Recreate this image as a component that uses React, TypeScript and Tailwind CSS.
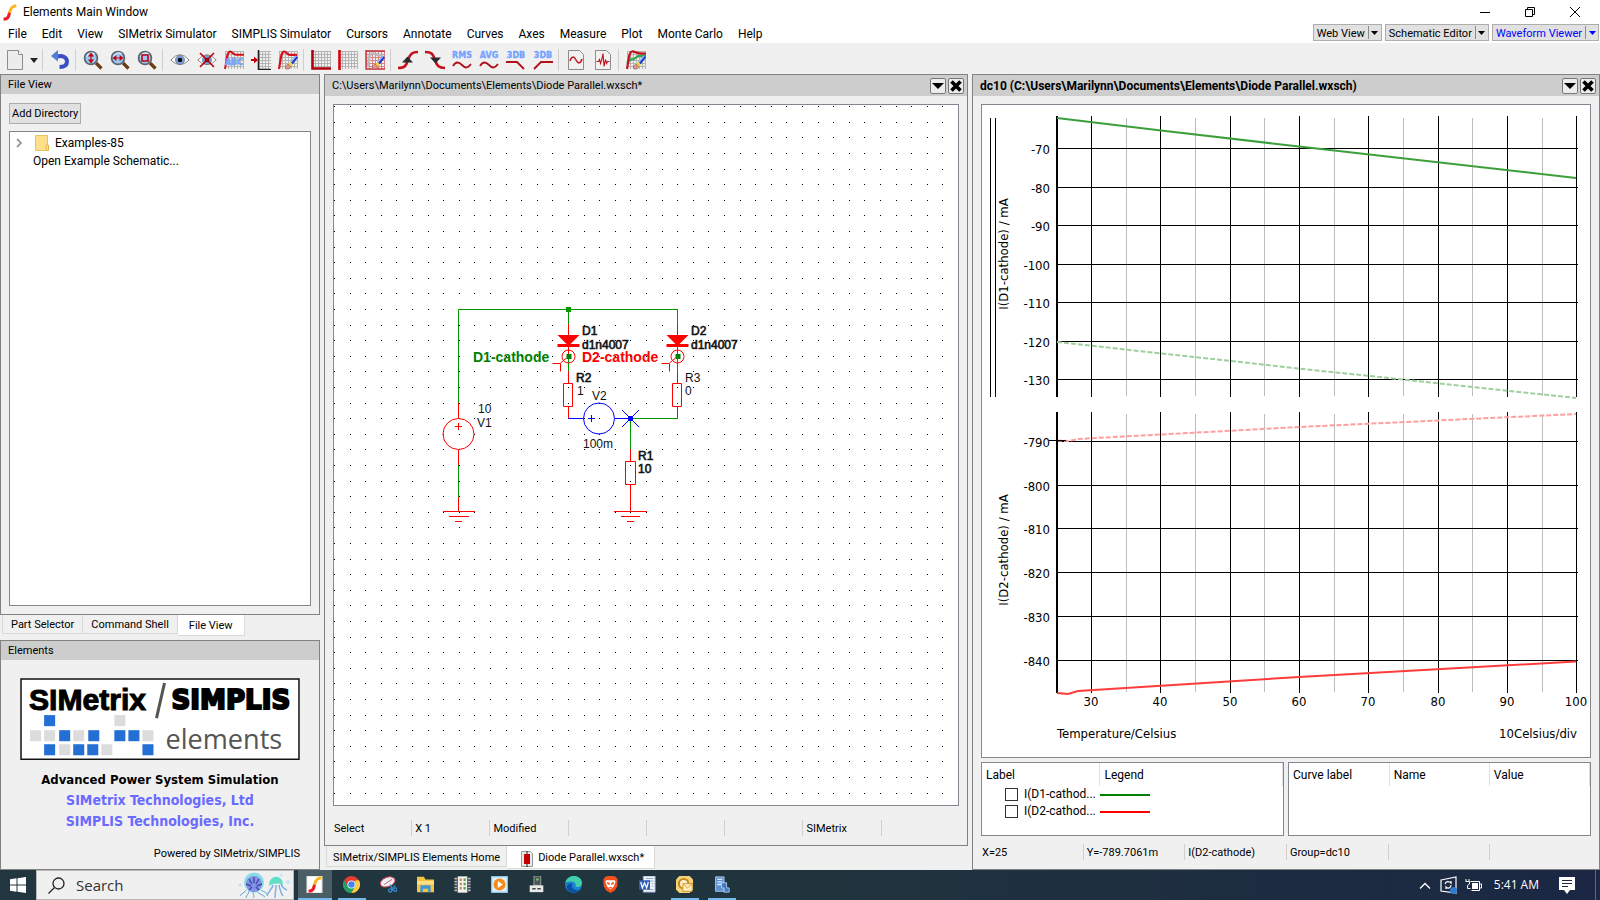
import type { ReactNode } from "react";

const menus = ["File", "Edit", "View", "SIMetrix Simulator", "SIMPLIS Simulator", "Cursors", "Annotate", "Curves", "Axes", "Measure", "Plot", "Monte Carlo", "Help"];

function Icon({ children, size = 20 }: { children: ReactNode; size?: number }) {
	return (
		<svg width={size} height={size} viewBox="0 0 20 20" fill="none" aria-hidden="true" className="shrink-0">
			{children}
		</svg>
	);
}

function Tool({ label, children }: { label: string; children: ReactNode }) {
	return (
		<button type="button" aria-label={label} className="flex w-[27px] items-center justify-center">
			<Icon>{children}</Icon>
		</button>
	);
}

function Separator() {
	return <span className="ml-[2px] mr-[3px] h-[22px] w-px bg-[#cfcfcf]" />;
}

function Grid({ x = 1, w = 19, color = "#b4b4b4" }) {
	const cols = [];
	for (let i = x; i <= x + w; i += 3) cols.push(i);
	return (
		<g stroke={color} strokeWidth="1" shapeRendering="crispEdges">
			{cols.map((c) => <path key={c} d={`M${c + 0.5} 1v18`} />)}
			{[1, 4, 7, 10, 13, 16].map((r) => <path key={r} d={`M${x} ${r + 0.5}H20`} />)}
		</g>
	);
}

function Pencil() {
	return (
		<g>
			<path d="M12.500 12.500 18 6l2 1.500-5.500 7z" fill="#1238c8" />
			<path d="M12.800 12.200 18 6" stroke="#8fb4ff" strokeWidth="1.400" />
			<path d="m10 14 2.500-2 2.500 2.600-2 2.200z" fill="#f3d23c" />
			<path d="M7 16.500 10 14l3 2.800L11 19H8z" fill="#d9968c" stroke="#94584f" strokeWidth=".6" />
		</g>
	);
}

function Magnifier() {
	return (
		<g>
			<path d="m13 13 5.500 5.500" stroke="#6b3b12" strokeWidth="3.200" />
			<circle cx="8" cy="8" r="6.400" fill="#9cc8f4" stroke="#5c6670" strokeWidth="1.800" />
			<path d="M3.600 7a5 5 0 0 1 8-3" stroke="#d8ecff" strokeWidth="1.200" />
		</g>
	);
}

function Eye() {
	return (
		<g>
			<path d="M.8 10Q10-.6 19.200 10 10 19.200.8 10z" fill="#fff" stroke="#8e887c" strokeWidth="1" />
			<circle cx="10" cy="10" r="4.600" fill="#7e9fd0" stroke="#51709e" strokeWidth=".6" />
			<circle cx="10" cy="10" r="2.300" fill="#0a0d18" />
		</g>
	);
}

function Sheet() {
	return <path d="M2.500.5h11l4 4v15h-15z" fill="#f1f1f1" stroke="#8d8d8d" />;
}

function SimText({ children, y = 7.5 }: { children: string; y?: number }) {
	return (
		<text x="10" y={y} textAnchor="middle" fontSize="8" fontWeight="700" fontFamily="DejaVu Sans" fill="#74a2ff" stroke="#74a2ff" strokeWidth=".3">
			{children}
		</text>
	);
}

function Swoosh() {
	return (
		<>
			<path d="M3 18c6-.5 6-3.500 7.200-8.500" stroke="#ee1c25" strokeWidth="3.600" />
			<path d="M10 10.500C11 5.500 12.500 2.500 18 2" stroke="#fbb615" strokeWidth="3.600" />
		</>
	);
}

function Toolbar() {
	return (
		<div className="flex h-[31px] items-center bg-[#f0f0f0] pt-[3px]" role="toolbar" aria-label="Main toolbar">
			<button type="button" aria-label="New" className="flex w-10 items-center justify-between pl-[5px] pr-[2px]">
				<Icon>
					<path d="M2.500.5h11l4 4v15h-15z" fill="#ececec" stroke="#8d8d8d" />
					<path d="M13.500.5v4h4" fill="#fff" stroke="#8d8d8d" />
				</Icon>
				<svg width="8" height="5" viewBox="0 0 8 5"><path d="M0 0h8L4 5z" fill="#222" /></svg>
			</button>
			<Separator />
			<Tool label="Undo">
				<path d="M7 6.500c5-1.500 10 .5 10 5 0 3.800-3 5.500-7.500 5.500" stroke="#3a4fc4" strokeWidth="4" />
				<path d="M1 6 8 0v11.500z" fill="#4f7fdc" />
			</Tool>
			<Separator />
			<Tool label="Zoom vertical">
				<Magnifier />
				<path d="M8 4.500v7M6.200 5.800 8 3.500l1.800 2.300zM6.200 10.200 8 12.500l1.800-2.300z" stroke="#c4000d" strokeWidth="1.200" fill="#c4000d" />
			</Tool>
			<Tool label="Zoom horizontal">
				<Magnifier />
				<path d="M4.500 8h7M5.800 6.200 3.500 8l2.300 1.800zM10.200 6.200 12.500 8l-2.300 1.800z" stroke="#c4000d" strokeWidth="1.200" fill="#c4000d" />
			</Tool>
			<Tool label="Zoom box">
				<Magnifier />
				<path d="M5 5h6v6H5z" stroke="#c4000d" strokeWidth="1.600" />
			</Tool>
			<Separator />
			<Tool label="Show curves"><Eye /></Tool>
			<Tool label="Hide curves">
				<Eye />
				<path d="m3 3 14 14M17 3 3 17" stroke="#c4000d" strokeWidth="1.600" />
			</Tool>
			<Tool label="Name curve">
				<Grid />
				<path d="M1 19C3 8 3 2 6 1.500c3 0 2 3 6 3.300h8" stroke="#d80d18" strokeWidth="2" />
				<SimText y={14.5}>ABC</SimText>
			</Tool>
			<Tool label="Move to axis">
				<Grid x={8} w={12} />
				<path d="M7.500 0v19.500H20" stroke="#222" strokeWidth="1.600" />
				<path d="M0 10h4" stroke="#c4000d" strokeWidth="2" />
				<path d="M3 6.500v7L7 10z" fill="#c4000d" />
			</Tool>
			<Tool label="Edit curve">
				<Grid />
				<path d="M1 19C3 8 3 2 6 1.500c3 0 2 3 6 3.300h7" stroke="#d80d18" strokeWidth="2.200" />
				<Pencil />
			</Tool>
			<Separator />
			<Tool label="New grid">
				<Grid />
				<path d="M1.500 0v18.500H20" stroke="#b4000c" strokeWidth="2.600" />
			</Tool>
			<Tool label="New axis">
				<Grid />
				<path d="M1.500 0v20" stroke="#d8000c" strokeWidth="2.600" />
			</Tool>
			<Tool label="Edit axis">
				<Grid color="#d98080" />
				<path d="M1 0v19H20M1 1h19" stroke="#c4333c" strokeWidth="1.400" />
				<path d="M3 17C4 8 4 4 7 3.500s3 2 11 2" stroke="#b9b9b9" strokeWidth="2.600" />
				<Pencil />
			</Tool>
			<Separator />
			<Tool label="Next peak">
				<path d="M0 18c7 0 8-2 10-8s4-8 10-8" stroke="#c4101a" strokeWidth="2.600" />
				<path d="M9.500 6.500 15 12.500H4z" fill="#2b2b2b" />
			</Tool>
			<Tool label="Next trough">
				<path d="M0 2c7 0 8 2 10 8s4 8 10 8" stroke="#c4101a" strokeWidth="2.600" />
				<path d="M10.500 13.500 5 7.500h11z" fill="#2b2b2b" />
			</Tool>
			<Tool label="RMS">
				<SimText>RMS</SimText>
				<path d="M1 16c3-5 6-4 9-1s5 4 9-1" stroke="#b4101a" strokeWidth="1.800" />
			</Tool>
			<Tool label="Average">
				<SimText>AVG</SimText>
				<path d="M1 16c3-5 6-4 9-1s5 4 9-1" stroke="#b4101a" strokeWidth="1.800" />
			</Tool>
			<Tool label="Low pass 3dB">
				<SimText>3DB</SimText>
				<path d="M0 12h11l7 7" stroke="#b4101a" strokeWidth="1.800" />
			</Tool>
			<Tool label="High pass 3dB">
				<SimText>3DB</SimText>
				<path d="M1 19 8 12h12" stroke="#b4101a" strokeWidth="1.800" />
			</Tool>
			<Separator />
			<Tool label="Plot waveform">
				<Sheet />
				<path d="M4 11c1.500-5 4-5 6-1s4.500 4 6-1" stroke="#c4101a" strokeWidth="1.500" />
			</Tool>
			<Tool label="Plot spectrum">
				<Sheet />
				<path d="M3.500 11.500h2l1-2 1 4 1.500-5 1-5 1 13 1.500-7 1 4 1-2h2" stroke="#c4101a" strokeWidth="1.100" />
			</Tool>
			<Separator />
			<Tool label="Edit plot">
				<Grid />
				<path d="M1 13C3 10 5 9 8 9l4-3h8" stroke="#2aa84a" strokeWidth="2" />
				<path d="M1 19C3 8 3 2 6 1.500s5 3 14 2" stroke="#c4101a" strokeWidth="2.200" />
				<Pencil />
			</Tool>
		</div>
	);
}

function ModeButton({ label, active }: { label: string; active?: boolean }) {
	return (
		<span className={`flex h-[17px] items-center border border-[#adadad] bg-[#e1e1e1] text-[11px] ${active ? "text-[#0000ff]" : "text-black"}`}>
			<button type="button" className="px-[3px] pt-px leading-[15px]">{label}</button>
			<button type="button" aria-label={`${label} options`} className="flex h-[13px] w-[13px] items-center justify-center border-l border-[#8a8a8a]">
				<svg width="7" height="4" viewBox="0 0 7 4"><path d="M0 0h7L3.500 4z" fill="currentColor" /></svg>
			</button>
		</span>
	);
}

function PanelTitle({ children, bold, controls }: { children: ReactNode; bold?: boolean; controls?: boolean }) {
	return (
		<header className={`flex items-center bg-[#cdcdcd] px-[7px] ${controls ? "h-[21px] pr-[3px]" : "h-[19px]"}`}>
			<h2 className={`flex-1 truncate ${bold ? "text-xs font-bold" : "pt-[2px]"}`}>{children}</h2>
			{controls && (
				<div className="flex gap-[2px]">
					<button type="button" aria-label="Panel menu" className="flex size-4 items-center justify-center rounded-xs border border-[#777] bg-[#ececec]">
						<svg width="12" height="6" viewBox="0 0 12 6"><path d="M0 0h12L6 6z" fill="#000" /></svg>
					</button>
					<button type="button" aria-label="Close panel" className="flex size-4 items-center justify-center rounded-xs border border-[#777] bg-[#ececec]">
						<svg width="12" height="12" viewBox="0 0 12 12"><path d="m1.500 1.500 9 9m0-9-9 9" stroke="#000" strokeWidth="3.600" /></svg>
					</button>
				</div>
			)}
		</header>
	);
}

const squares = [
	[24, 36, 1], [94, 36, 0],
	[10, 51, 0], [24, 51, 0], [39, 51, 1], [53, 51, 0], [68, 51, 1], [94, 51, 1], [108, 51, 1], [122, 51, 0],
	[24, 65, 1], [39, 65, 0], [53, 65, 1], [67, 65, 1], [81, 65, 0], [122, 65, 1],
];

function Logo() {
	return (
		<svg viewBox="0 0 279 82" className="block w-full" role="img" aria-label="SIMetrix/SIMPLIS elements">
			<rect x="1" y="1" width="277" height="80" fill="#fff" stroke="#111" strokeWidth="1.500" />
			<text x="9" y="32" fontFamily="Liberation Sans" fontWeight="700" fontSize="30" fill="#000" stroke="#000" strokeWidth="1">SIMetrix</text>
			<path d="m144 5-8 35" stroke="#555" strokeWidth="3" />
			<text x="151" y="31" fontFamily="DejaVu Sans" fontWeight="700" fontSize="26" fill="#000" stroke="#000" strokeWidth="2">SIMPLIS</text>
			{squares.map(([x, y, on]) => (
				<rect key={`${x}-${y}`} x={x} y={y + 1} width="11" height="11" fill={on ? "#246fd4" : "#dcdcdc"} />
			))}
			<text x="145" y="71" fontFamily="Open Sans" fontSize="27" fill="#555">elements</text>
		</svg>
	);
}

function SideBar() {
	return (
		<aside className="flex w-80 shrink-0 flex-col">
			<section className="flex flex-1 flex-col border border-[#828282]">
				<PanelTitle>File View</PanelTitle>
				<div className="flex flex-1 flex-col p-2">
					<button type="button" className="mt-px h-[21px] self-start border border-[#adadad] bg-[#e1e1e1] px-[2px] pt-[2px]">Add Directory</button>
					<ul className="mt-[7px] flex-1 border border-[#828790] bg-white pt-[2px] text-xs">
						<li className="flex h-[18px] items-center">
							<svg width="7" height="10" viewBox="0 0 7 10" className="ml-[6px]"><path d="m1 1 4 4-4 4" fill="none" stroke="#9a9a9a" strokeWidth="1.800" /></svg>
							<svg width="14" height="16" viewBox="0 0 14 16" className="ml-[12px] mr-[6px]">
								<path d="M.5.5h12v15H.5z" fill="#ffe08a" stroke="#e9c35c" />
								<path d="M11 10h2.500v5.500H11z" fill="#ffe08a" stroke="#e0b64a" />
							</svg>
							Examples-85
						</li>
						<li className="flex h-[18px] items-center pl-[23px]">Open Example Schematic...</li>
					</ul>
				</div>
			</section>
			<nav className="flex items-start pl-[2px]">
				<button type="button" className="h-[19px] border border-t-0 border-[#d9d9d9] px-[8px] pt-[3px]">Part Selector</button>
				<button type="button" className="h-[19px] border border-l-0 border-t-0 border-[#d9d9d9] px-[8px] pt-[3px]">Command Shell</button>
				<button type="button" className="h-[21px] border border-l-0 border-t-0 border-[#d9d9d9] bg-white px-[11px] pt-[3px]">File View</button>
			</nav>
			<section className="mt-1 border border-[#828282]">
				<PanelTitle>Elements</PanelTitle>
				<div className="px-[19px] pb-[7px] pt-[18px]">
					<Logo />
					<div className="mt-[10px] text-center font-['DejaVu_Sans_Condensed','Open_Sans',sans-serif] text-[13px] font-bold leading-[20px]">
						<p>Advanced Power System Simulation</p>
						<p><a href="#simetrix" className="text-sm leading-[20px] text-[#6a6aff]">SIMetrix Technologies, Ltd</a></p>
						<p><a href="#simplis" className="text-sm leading-[20px] text-[#6a6aff]">SIMPLIS Technologies, Inc.</a></p>
					</div>
					<p className="mt-[14px] text-right leading-[16px]">Powered by SIMetrix/SIMPLIS</p>
				</div>
			</section>
		</aside>
	);
}

// grid pitch of the schematic sheet, snapped to whole pixels
const PITCH = 15.6;
let dots = "";
for (let r = 0; r < 60; r++) {
	for (let c = 0; c < 80; c++) {
		dots += `M${Math.round(PITCH * c)} ${Math.round(1.2 + PITCH * r) + 0.5}h1`;
	}
}

function Diode({ x }: { x: number }) {
	return (
		<g>
			<path d={`M${x} 324v12M${x} 347v8`} stroke="#f00" />
			<path d={`M${x} 309v15M${x} 356v15`} stroke="#090" />
			<path d={`M${x - 11} 335h22l-9 9h-4z`} fill="#f00" />
			<path d={`M${x - 11} 345.500h22`} stroke="#f00" strokeWidth="3" />
			<circle cx={x} cy="356.500" r="6.500" stroke="#f00" />
			<path d={`M${x - 16} 363.500h8v8M${x - 8} 363l6-5`} stroke="#f00" />
			<path d={`M${x - 2} 354h5v5h-5z`} fill="#007f00" />
			<path d={`M${x} 371v12M${x} 406v12`} stroke="#f00" />
			<path d={`M${x - 5} 383.500h9v23h-9z`} stroke="#f00" />
		</g>
	);
}

function Schematic() {
	return (
		<svg className="block h-full w-full" role="img" aria-label="Diode Parallel schematic" fill="none">
			<path d={dots} stroke="#000" shapeRendering="crispEdges" />
			<g transform="translate(-334 -105)">
				<path d="M458.500 403V309.500H677.500M458.500 465v32M630.500 418v31M630 418.500h48" stroke="#090" />
				<Diode x={568.5} />
				<Diode x={677.5} />
				<path d="M566 307h5v5h-5z" fill="#090" />
				<g stroke="#f00">
					<path d="M458.500 403v15M458.500 450v15M458.500 497v15M443 511.500h32M449 516.500h20M455 521.500h7M455 426.500h7M458.500 423v7" />
					<circle cx="458.500" cy="434" r="15.500" />
					<path d="M630.500 449v12M630.500 485v27M614 511.500h33M621 516.500h19M627 521.500h7M625.500 461.500h10v23h-10z" />
				</g>
				<g stroke="#00f">
					<circle cx="599" cy="418.500" r="15.500" />
					<path d="M568 418.500h15M615 418.500h16M588 418.500h7M591.500 415v7M622 410l17 17M639 410l-17 17" />
					<path d="M628 416h5v5h-5z" fill="#00f" stroke="none" />
				</g>
				<g fill="#111" fontFamily="Liberation Sans, Arial, sans-serif" fontSize="12">
					<g stroke="#111" strokeWidth=".6">
						<text x="582" y="335">D1</text>
						<text x="582" y="349">d1n4007</text>
						<text x="691" y="335">D2</text>
						<text x="691" y="349">d1n4007</text>
						<text x="576" y="382">R2</text>
						<text x="638" y="460">R1</text>
						<text x="638" y="473">10</text>
					</g>
					<text x="577" y="395">1</text>
					<text x="685" y="382">R3</text>
					<text x="685" y="395">0</text>
					<text x="592" y="400">V2</text>
					<text x="583" y="448">100m</text>
					<text x="478" y="413">10</text>
					<text x="477" y="427">V1</text>
					<text x="473" y="362" fontSize="14" fontWeight="700" fill="#007f00">D1-cathode</text>
					<text x="582" y="362" fontSize="14" fontWeight="700" fill="#f00">D2-cathode</text>
				</g>
			</g>
		</svg>
	);
}

function StatusCells({ items, className }: { items: string[]; className: string }) {
	return (
		<footer className={`grid h-4 items-center ${className}`}>
			{items.map((t, i) => (
				<span key={i} className={`h-4 truncate leading-[18px] ${i ? "border-l border-[#d0d0d0] pl-[3px]" : "pl-px"}`}>{t}</span>
			))}
		</footer>
	);
}

function Editor() {
	return (
		<main className="flex min-w-0 flex-[645] flex-col">
			<section className="flex min-h-0 flex-1 flex-col border border-[#828282]">
				<PanelTitle controls>C:\Users\Marilynn\Documents\Elements\Diode Parallel.wxsch*</PanelTitle>
				<div className="mx-2 mt-2 min-h-0 flex-1 overflow-hidden border border-[#828790] bg-white">
					<Schematic />
				</div>
				<StatusCells className="mx-2 mb-[9px] mt-[14px] grid-cols-8" items={["Select", "X 1", "Modified", "", "", "", "SIMetrix", ""]} />
			</section>
			<nav className="flex h-6 items-start pl-[2px]">
				<button type="button" className="h-[21px] border border-t-0 border-[#d9d9d9] px-[6px] pt-[4px]">SIMetrix/SIMPLIS Elements Home</button>
				<button type="button" className="flex h-[23px] items-center border border-l-0 border-t-0 border-[#d9d9d9] bg-white px-[10px] pt-[3px]">
					<svg width="20" height="16" viewBox="0 0 20 16" className="mr-px">
						<path d="M4.500.5h9l2 2v13h-11z" fill="#e8e8e8" stroke="#999" />
						<path d="M10 0v16" stroke="#222" />
						<path d="M7 3h6v10H7z" fill="#c00000" />
					</svg>
					Diode Parallel.wxsch*
				</button>
			</nav>
		</main>
	);
}

const xMajor = [1057, 1091, 1160, 1230, 1299, 1368, 1438, 1507, 1576];
const xMinor = [1126, 1195, 1264, 1334, 1403, 1472, 1542];
const upper: [number, number][] = [[148, -70], [187, -80], [225, -90], [264, -100], [302, -110], [341, -120], [379, -130]];
const lower: [number, number][] = [[441, -790], [485, -800], [528, -810], [572, -820], [616, -830], [660, -840]];

function PlotGrid({ top, bottom, rows }: { top: number; bottom: number; rows: [number, number][] }) {
	return (
		<g>
			<g shapeRendering="crispEdges">
				{xMinor.map((x) => <path key={x} d={`M${x + 0.5} ${top + 2}V${bottom - 1}`} stroke="#bdbdbd" />)}
				{xMajor.map((x) => <path key={x} d={`M${x + 0.5} ${top}V${bottom}`} stroke="#000" />)}
				{rows.map(([y]) => <path key={y} d={`M1057 ${y + 0.5}H1578`} stroke="#000" />)}
			</g>
			{rows.map(([y, v]) => <text key={y} x="1050" y={y + 6} textAnchor="end">{v}</text>)}
		</g>
	);
}

function Waveforms() {
	return (
		<svg viewBox="982 105 607 652" preserveAspectRatio="xMinYMin meet" className="block h-full w-full" role="img" aria-label="Diode currents against temperature" fill="none">
			<g fill="#000" fontSize="13" fontFamily="DejaVu Sans Condensed, Open Sans, sans-serif">
				<path d="M990.500 118v279M995.500 118v279" stroke="#000" shapeRendering="crispEdges" />
				<PlotGrid top={116} bottom={397} rows={upper} />
				<PlotGrid top={412} bottom={693} rows={lower} />
				<text transform="translate(1008 254) rotate(-90)" textAnchor="middle">I(D1-cathode) / mA</text>
				<text transform="translate(1008 550) rotate(-90)" textAnchor="middle">I(D2-cathode) / mA</text>
				{xMajor.slice(1).map((x, i) => <text key={x} x={x} y="706" textAnchor="middle">{30 + i * 10}</text>)}
				<text x="1057" y="738">Temperature/Celsius</text>
				<text x="1577" y="738" textAnchor="end">10Celsius/div</text>
			</g>
			<g strokeWidth="2">
				<path d="M1057 118 1161 130.500 1299 146.500 1576 178" stroke="#3c9f3c" />
				<path d="M1057 342 1299 368.500 1576 398" stroke="#9fcf9f" strokeDasharray="5 2" />
				<path d="M1057 440.500 1068 441 1078 439 1299 427 1576 414" stroke="#ff9f9f" strokeDasharray="5 2" />
				<path d="M1057 693 1068 694 1078 691 1299 677 1576 661.500" stroke="#ff3c3c" />
			</g>
			<path d="M1049 440.500h17M1057.500 432v17" stroke="#000" shapeRendering="crispEdges" />
			<path d="M1056.500 116v281M1056.500 412v281" stroke="#000" shapeRendering="crispEdges" />
		</svg>
	);
}

function CurveTables() {
	const head = "h-[23px] border-r border-[#e0e0e0] px-[4px] text-left font-normal";
	return (
		<div className="mx-2 mt-1 flex h-[74px] gap-1 text-xs">
			<div className="flex-1 border border-[#828790] bg-white">
				<table className="w-full table-fixed border-collapse">
					<thead>
						<tr>
							<th className={`${head} w-[118px]`}>Label</th>
							<th className={head}>Legend</th>
						</tr>
					</thead>
					<tbody>
						{[["I(D1-cathod...", "bg-[#008000]"], ["I(D2-cathod...", "bg-[#ff0000]"]].map(([name, color]) => (
							<tr key={name} className="h-[17px] leading-[17px]">
								<td className="p-0">
									<label className="flex items-center pl-[23px]">
										<input type="checkbox" className="mr-[6px] size-[13px] shrink-0 appearance-none border border-[#333] bg-white" />
										<span className="whitespace-nowrap">{name}</span>
									</label>
								</td>
								<td className="p-0"><span className={`block h-[2px] w-[50px] ${color}`} /></td>
							</tr>
						))}
					</tbody>
				</table>
			</div>
			<div className="flex-1 border border-[#828790] bg-white">
				<table className="w-full table-fixed border-collapse">
					<thead>
						<tr>
							<th className={head}>Curve label</th>
							<th className={head}>Name</th>
							<th className={head}>Value</th>
						</tr>
					</thead>
				</table>
			</div>
		</div>
	);
}

function WaveformPanel() {
	return (
		<section className="flex min-w-0 flex-[627] flex-col border border-[#828282]">
			<PanelTitle bold controls>{"dc10 (C:\\Users\\Marilynn\\Documents\\Elements\\Diode Parallel.wxsch)"}</PanelTitle>
			<div className="mx-2 mt-2 min-h-0 flex-1 overflow-hidden border border-[#828790] bg-white">
				<Waveforms />
			</div>
			<CurveTables />
			<StatusCells className="mx-2 mb-[9px] mt-[8px] grid-cols-6" items={["X=25", "Y=-789.7061m", "I(D2-cathode)", "Group=dc10", "", ""]} />
		</section>
	);
}

function TaskButton({ label, open, active, children }: { label: string; open?: boolean; active?: boolean; children: ReactNode }) {
	return (
		<button type="button" aria-label={label} className="flex h-full w-[37px] justify-center">
			<span className={`flex h-full items-center justify-center border-b-2 ${active ? "w-[34px] bg-[#4b5d65]" : "w-7"} ${open || active ? "border-[#76b9ed]" : "border-transparent"}`}>
				<Icon size={17}>{children}</Icon>
			</span>
		</button>
	);
}

function Taskbar() {
	return (
		<div className="flex h-[30px] shrink-0 items-center bg-linear-to-r from-[#22363f] via-[#20343d] to-[#1b2743] font-['Open_Sans',sans-serif] text-xs text-white">
			<button type="button" aria-label="Start" className="flex h-full w-9 items-center justify-center">
				<svg width="16" height="16" viewBox="0 0 16 16" fill="#fff"><path d="M0 2.200 6.500 1.300v6.200H0zM7.500 1.200 16 0v7.500H7.500zM0 8.500h6.500v6.200L0 13.800zM7.500 8.500H16V16l-8.500-1.200z" /></svg>
			</button>
			<label className="flex h-[30px] w-[258px] items-center border border-[#b8b8b8] bg-[#f0f0f0] pl-[11px] text-[#333]">
				<svg width="17" height="17" viewBox="0 0 17 17" fill="none" stroke="#222" strokeWidth="1.300"><circle cx="10.500" cy="6.500" r="5.500" /><path d="M6.500 10.500.5 16.500" /></svg>
				<input type="text" aria-label="Search" placeholder="Search" className="ml-[11px] w-[150px] bg-transparent text-[15px] placeholder:text-[#333]" />
				<svg width="54" height="27" viewBox="0 0 54 27" fill="none" className="ml-[11px]">
					<path d="M9 18c-1 3-5 3-6 6M12 19c0 3-3 4-3 7M16 20c0 3 2 4 0 6M20 19c1 3 5 3 8 6M23 17c2 3 5 2 7 5" stroke="#5aa8cf" />
					<circle cx="17" cy="10.500" r="10" fill="#8adbe6" />
					<circle cx="17" cy="12" r="8" fill="#8492e6" />
					<path d="M17 5v6M12 7l3 5M22 7l-3 5M9 12l5 2M25 12l-5 2M12 18l3-3M22 18l-3-3" stroke="#3c4ba8" strokeWidth="1.400" />
					<path d="M32 14c0-12 14-12 14-1-4-2-9-2-14 1z" fill="#5fe0c4" />
					<path d="M36 13c-1 5-5 6-6 11M39 13c0 5-1 8-1 13M42 13c1 4 1 7 4 11M44 12c2 5 4 5 6 6" stroke="#7aaee0" strokeWidth="1.400" />
					<circle cx="3" cy="13" r="1.600" fill="#c4e4f6" /><circle cx="51" cy="10" r="2" fill="#c4e4f6" /><circle cx="44" cy="3" r="1.500" fill="#c4e4f6" />
				</svg>
			</label>
			<nav className="flex h-full flex-1 pl-[2px]" aria-label="Applications">
				<TaskButton label="Elements" active>
					<path d="M1 0h18v20H1z" fill="#fff" stroke="#c9c9c9" />
					<Swoosh />
				</TaskButton>
				<TaskButton label="Chrome" open>
					<circle cx="10" cy="10" r="10" fill="#e33b2e" />
					<path d="M1.300 5A10 10 0 0 0 10 20l4.500-8L10 10H4z" fill="#1da462" />
					<path d="M18.700 5A10 10 0 0 1 10 20l4.500-8V5z" fill="#ffcd40" />
					<circle cx="10" cy="10" r="4.800" fill="#fff" /><circle cx="10" cy="10" r="3.800" fill="#4285f4" />
				</TaskButton>
				<TaskButton label="Snipping Tool">
					<ellipse cx="9" cy="7" rx="9" ry="5.500" transform="rotate(-20 9 7)" fill="#eceff2" stroke="#c6404a" strokeWidth="1.200" />
					<path d="m5 10 9-6" stroke="#c6404a" /><path d="m12 10 3 7M18 11l-5 5" stroke="#3a8fd6" strokeWidth="1.400" />
					<circle cx="12" cy="17" r="2" stroke="#3a8fd6" strokeWidth="1.400" /><circle cx="18" cy="16" r="2" stroke="#3a8fd6" strokeWidth="1.400" />
				</TaskButton>
				<TaskButton label="File Explorer">
					<path d="M0 1h8l2 3h10v15H0z" fill="#f5c242" /><path d="M0 6h20v4H0z" fill="#ffe08a" />
					<path d="M4 19v-8h12v8h-3v-4H7v4z" fill="#3f95d8" />
				</TaskButton>
				<TaskButton label="Circuit">
					<path d="M4 0h12v20H4z" fill="#f2f2f2" stroke="#555" />
					<path d="M2 2v16M18 2v16" stroke="#bbb" strokeWidth="3" strokeDasharray="2 1.500" />
					<path d="M8 3v14" stroke="#d28a4a" strokeWidth="2.500" strokeDasharray="3 2" /><path d="M12.500 3v14" stroke="#50a050" strokeWidth="2.500" strokeDasharray="3 2" />
				</TaskButton>
				<TaskButton label="Media Player">
					<path d="M0 0h20v20H0z" fill="#8cc3ea" /><path d="M1.500 1.500h17v17h-17z" fill="#dff0fb" />
					<circle cx="10" cy="10" r="7" fill="#f58a16" /><path d="m8 6 6 4-6 4z" fill="#fff" />
				</TaskButton>
				<TaskButton label="Device">
					<path d="M7 0h8v11H7z" fill="#4d5356" stroke="#aaa" /><circle cx="11" cy="4" r="1.500" fill="#58e058" />
					<path d="M2 11h16v8H2z" fill="#e9e9e9" /><path d="M5 14h4v2H5zM11 14h4v2h-4z" fill="#444" />
				</TaskButton>
				<TaskButton label="Edge">
					<circle cx="10" cy="10" r="10" fill="#1a80d4" />
					<path d="M.5 8C2-2 19-3 20 8c0 5-6 6-8 4 3-3-3-8-11.500-4z" fill="#40cfa8" />
					<path d="M8 11c0 5 5 7 10 5-5 6-15 4-16-3 0-3 4-5 7-4-1 .5-1 1-1 2z" fill="#0c4fa0" />
				</TaskButton>
				<TaskButton label="Brave">
					<path d="m4 1 3-1h6l3 1 2.500 3-.5 8-3 5-5 3-5-3-3-5-.500-8z" fill="#f4511e" />
					<path d="M5 5h10l1 2-2 5-4 4-4-4-2-5z" fill="#fff" /><path d="m6 7 3 1v3l-3-2zM14 7l-3 1v3l3-2zM8 13h4l-2 2z" fill="#f4511e" />
				</TaskButton>
				<TaskButton label="Word">
					<path d="M5 0h14v19H5z" fill="#f4f7fb" stroke="#8aa0c8" /><path d="M8 3h9M8 6h9M15 9h2M15 12h2M8 16h9" stroke="#7b93c0" />
					<path d="M0 5h13v11H0z" fill="#2f5fb4" /><path d="m2 7 2 7 2.500-6L9 14l2-7" stroke="#fff" strokeWidth="1.500" />
				</TaskButton>
				<TaskButton label="Outlook" open>
					<path d="M4 0h12l4 4v12l-4 4H4l-4-4V4z" fill="#f5d27c" />
					<circle cx="9" cy="9" r="5.500" stroke="#c98a1c" strokeWidth="2.500" fill="#fff6da" />
					<path d="M8 9h11v9H8z" fill="#fff0c0" stroke="#c98a1c" /><path d="m8 9 5.500 5L19 9" stroke="#c98a1c" />
				</TaskButton>
				<TaskButton label="System Tool" open>
					<path d="M3 1h10v17H3z" fill="#5b8fd0" stroke="#b9d2f0" /><path d="M5 4h6M5 7h6M5 10h6" stroke="#dcecff" strokeWidth="1.500" />
					<path d="M10 8h6v6h3v5h-6v-5h-3z" fill="#3e78c0" stroke="#b9d2f0" />
				</TaskButton>
			</nav>
			<div className="flex h-full items-center">
				<svg width="12" height="7" viewBox="0 0 12 7" fill="none" stroke="#fff" strokeWidth="1.300" className="mr-[9px]"><path d="m1 6.500 5-5 5 5" /></svg>
				<svg width="18" height="18" viewBox="0 0 18 18" fill="none" stroke="#fff" strokeWidth="1.200" className="mr-[7px]">
					<path d="M1 4 16 1v16L1 15zM5 8c1-3 4-3 6-1V5M11 9c0 3-3 4-5 2v2" /><circle cx="13.500" cy="14.500" r="3.500" fill="#2e7cd0" stroke="none" />
				</svg>
				<svg width="17" height="14" viewBox="0 0 17 14" fill="none" stroke="#fff" className="mr-[12px]">
					<path d="M5.500 3.500h9v9h-8M15 6h1.500v4H15M1 1v2M4 1v2M.5 3.500h4V6l-2 1.500v3h3" /><path d="M7 5h6v6H7z" fill="#fff" stroke="none" />
				</svg>
				<time>5:41 AM</time>
				<svg width="16" height="19" viewBox="0 0 16 19" className="ml-[20px] mr-[20px]"><path d="M0 1h16v13h-5l-3 4-3-4H0z" fill="#fff" /><path d="M3 4.500h10M3 7.500h10M3 10.500h6" stroke="#1b2743" /></svg>
				<span className="mr-1 h-full w-px bg-[#5b6780]" />
			</div>
		</div>
	);
}

export default function App() {
	return (
		<div className="flex h-screen min-h-[640px] flex-col overflow-hidden bg-[#f0f0f0] font-['Roboto','Open_Sans',sans-serif] text-xs text-black">
			<header className="bg-white">
				<div className="flex h-6 items-center">
					<span className="ml-[1px] mr-[5px]"><Icon size={17}><Swoosh /></Icon></span>
					<h1 className="flex-1">Elements Main Window</h1>
					<div className="flex h-5 items-center">
						<button type="button" aria-label="Minimize" className="flex w-[45px] justify-center"><svg width="10" height="10"><path d="M0 5.500h10" stroke="#000" /></svg></button>
						<button type="button" aria-label="Restore" className="flex w-[45px] justify-center"><svg width="10" height="10" fill="none" stroke="#000"><path d="M.5 2.500h7v7h-7zM2.500 2V.5h7v7H8" /></svg></button>
						<button type="button" aria-label="Close" className="mr-[3px] flex w-[45px] justify-center"><svg width="10" height="10" stroke="#000"><path d="m0 0 10 10M10 0 0 10" /></svg></button>
					</div>
				</div>
				<div className="flex h-[19px] items-start justify-between pr-px">
					<nav className="flex gap-px pl-px">
						{menus.map((m) => <button key={m} type="button" className="whitespace-nowrap px-[7px] leading-[21px]">{m}</button>)}
					</nav>
					<div className="flex gap-[3px]">
						<ModeButton label="Web View" />
						<ModeButton label="Schematic Editor" />
						<ModeButton label="Waveform Viewer" active />
					</div>
				</div>
			</header>
			<Toolbar />
			<div className="flex min-h-0 flex-1 gap-1 text-[11px]">
				<SideBar />
				<Editor />
				<WaveformPanel />
			</div>
			<Taskbar />
		</div>
	);
}
